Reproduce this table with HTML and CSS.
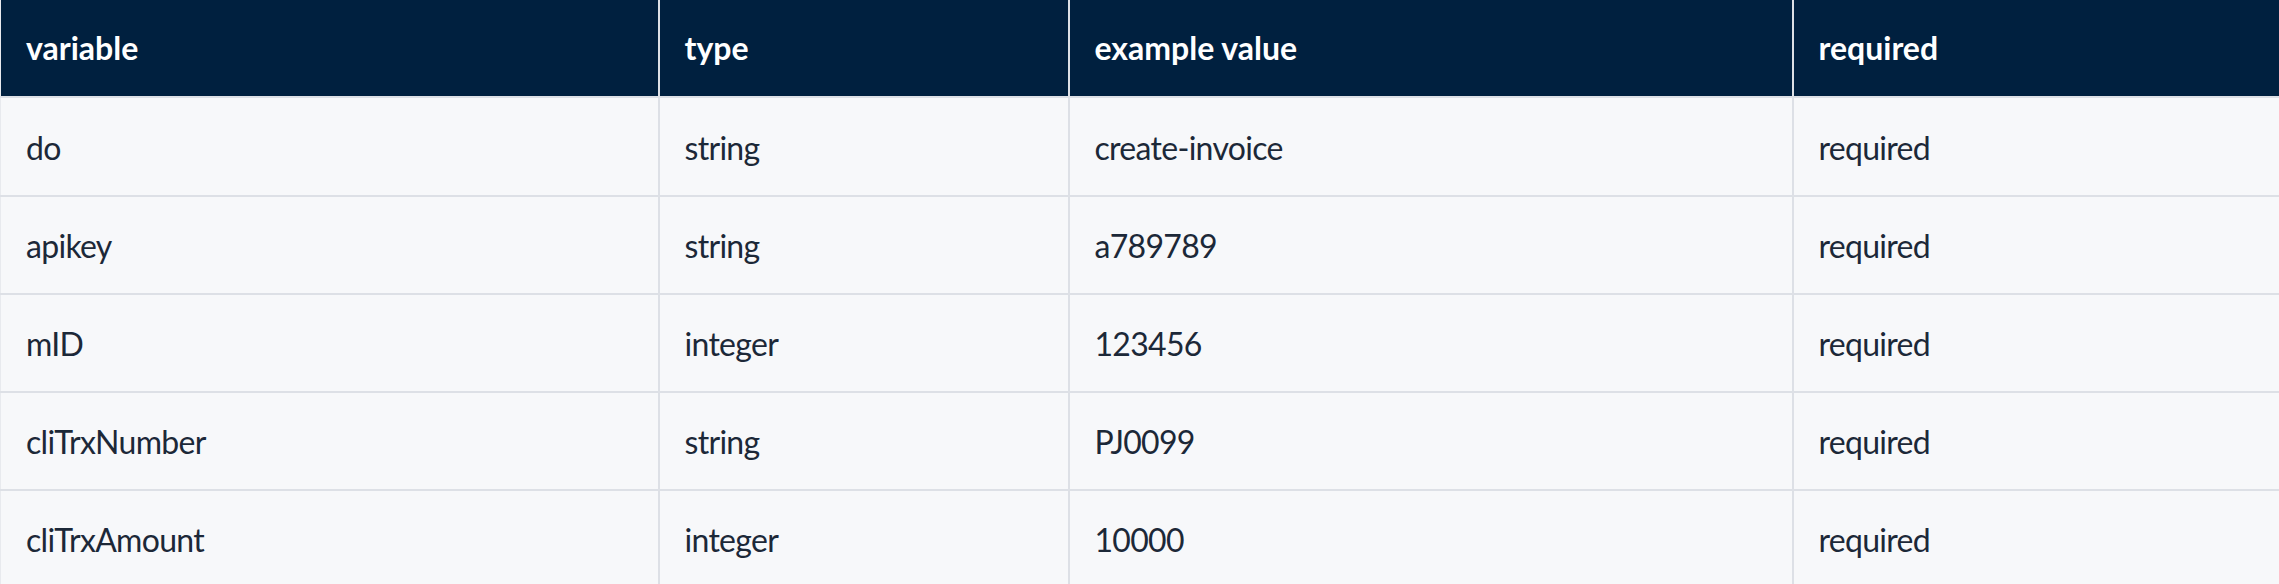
FILE: index.html
```html
<!DOCTYPE html>
<html lang="en">
<head>
<meta charset="utf-8">
<title>Parameters</title>
<link rel="stylesheet" href="styles.css">
</head>
<body>
<table class="params">
  <colgroup>
    <col class="c-var">
    <col class="c-type">
    <col class="c-ex">
    <col class="c-req">
  </colgroup>
  <thead>
    <tr><th>variable</th><th>type</th><th>example value</th><th>required</th></tr>
  </thead>
  <tbody>
    <tr><td>do</td><td>string</td><td>create-invoice</td><td>required</td></tr>
    <tr><td>apikey</td><td>string</td><td>a789789</td><td>required</td></tr>
    <tr><td>mID</td><td>integer</td><td>123456</td><td>required</td></tr>
    <tr><td>cliTrxNumber</td><td>string</td><td>PJ0099</td><td>required</td></tr>
    <tr><td>cliTrxAmount</td><td>integer</td><td>10000</td><td>required</td></tr>
  </tbody>
</table>
</body>
</html>
```
FILE: styles.css
```css
html, body {
  margin: 0;
  padding: 0;
  background: #f7f8fa;
}
body {
  font-family: Lato, "Noto Sans", sans-serif;
  color: #1c2838;
  overflow: hidden;
}
.params {
  width: 2279px;
  border-collapse: collapse;
  table-layout: fixed;
  font-size: 32px;
  line-height: 48px;
}
.c-var { width: 658px; }
.c-type { width: 410px; }
.c-ex { width: 724px; }
.c-req { width: 487px; }
.params th,
.params td {
  text-align: left;
  padding: 24px 25px;
  border: 2px solid #dde0e6;
  white-space: nowrap;
}
.params th {
  background: #00203f;
  color: #ffffff;
  font-weight: 700;
  padding-top: 24px;
  padding-bottom: 24px;
  border-top: none;
}
.params tr > :first-child { border-left: 1px solid #e8eaee; }
.params tr > :last-child { border-right: none; }
.params td {
  background: #f7f8fa;
  font-weight: 400;
  letter-spacing: -0.7px;
  padding-top: 25px;
  padding-bottom: 23px;
}
.params tbody tr:first-child td {
  padding-top: 26px;
}
```
